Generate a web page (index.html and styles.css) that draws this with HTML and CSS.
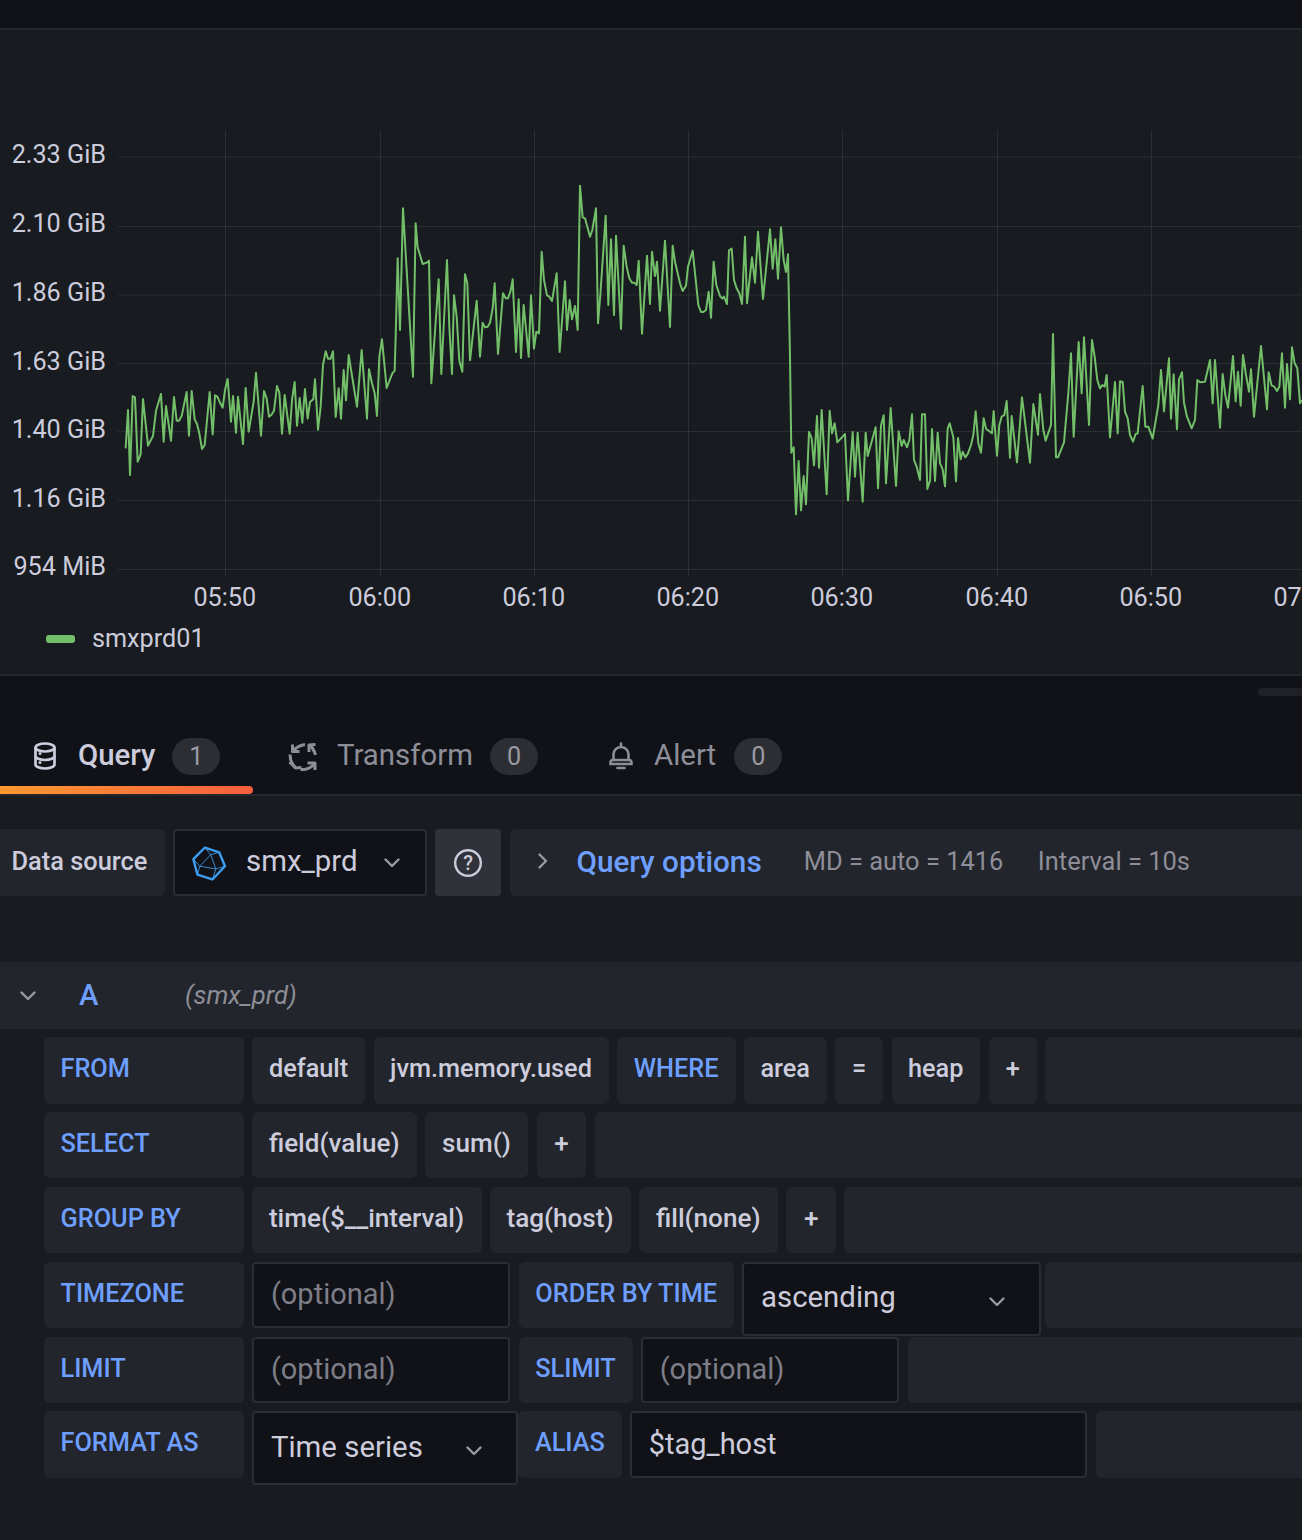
FILE: index.html
```html
<!DOCTYPE html>
<html lang="en">
<head>
<meta charset="utf-8">
<title>Query editor</title>
<link rel="stylesheet" href="styles.css">
</head>
<body>
<div class="topbar"></div>
<section class="panel">
  <svg class="chart" viewBox="0 30 1302 585" width="1302" height="585">
    <g class="grid">
      <path d="M118 157H1302M118 226.500H1302M118 295H1302M118 363.500H1302M118 431.500H1302M118 500.500H1302M118 569.500H1302"/>
      <path d="M225.500 130V577M380.500 130V577M534.500 130V577M688.500 130V577M842.500 130V577M997.500 130V577M1151.500 130V577"/>
    </g>
    <g class="ylabels">
      <text x="106" y="162.800">2.33 GiB</text>
      <text x="106" y="231.800">2.10 GiB</text>
      <text x="106" y="300.800">1.86 GiB</text>
      <text x="106" y="369.800">1.63 GiB</text>
      <text x="106" y="437.800">1.40 GiB</text>
      <text x="106" y="506.800">1.16 GiB</text>
      <text x="106" y="574.800">954 MiB</text>
    </g>
    <g class="xlabels">
      <text x="224.800" y="605.800">05:50</text>
      <text x="379.800" y="605.800">06:00</text>
      <text x="533.800" y="605.800">06:10</text>
      <text x="687.800" y="605.800">06:20</text>
      <text x="841.800" y="605.800">06:30</text>
      <text x="996.800" y="605.800">06:40</text>
      <text x="1150.800" y="605.800">06:50</text>
      <text x="1304.800" y="605.800">07:00</text>
    </g>
    <g class="series">
      <polyline transform="translate(120 170) scale(.33333)" points="17,835 24,720 30,915 38,678 45,682 53,875 62,853 69,687 84,827 99,798 108,722 123,672 131,815 138,708 153,812 162,681 170,752 177,752 185,738 200,666 207,797 215,663 224,748 231,762 238,790 246,837 254,825 269,666 278,793 285,676 292,680 301,700 308,713 315,660 323,627 333,755 339,678 348,788 354,680 369,822 377,654 386,785 401,695 408,608 423,797 432,663 440,685 447,740 454,735 462,722 471,648 478,668 486,791 494,675 509,791 516,690 524,636 531,767 539,684 547,758 555,657 563,746 570,696 580,688 585,628 594,779 602,710 609,585 617,544 624,566 632,566 639,544 647,741 656,655 663,746 671,600 678,691 686,555 711,710 725,540 741,746 747,598 756,640 764,670 771,738 778,560 786,508 800,654 817,610 824,602 827,500 833,265 840,480 849,115 879,620 887,160 893,232 908,282 920,278 927,272 934,640 956,328 964,612 981,270 988,470 996,612 1002,376 1010,440 1018,572 1027,605 1035,313 1042,340 1050,572"/>
      <polyline transform="translate(470 170) scale(.33333)" points="0,572 20,392 30,560 38,458 45,472 53,470 60,458 68,415 74,340 84,552 99,370 107,385 114,385 122,362 128,328 138,546 146,388 153,564 161,405 176,560 183,376 192,536 199,485 207,490 215,245 222,330 231,376 238,380 246,393 260,310 269,546 285,334 291,480 299,390 306,448 315,408 323,480 330,47 338,142 345,145 360,200 367,180 378,115 384,460 391,375 407,137 415,405 423,208 432,435 438,197 453,477 461,227 470,290 478,325 486,338 493,338 500,345 506,272 516,491 531,257 540,402 546,245 555,318 561,275 570,422 585,212 600,471 608,227 615,275 630,340 638,363 648,347 654,290 668,242 685,405 693,426 700,426 708,420 716,365 723,443 731,275 739,345 750,378 757,386 762,380 771,402 777,241 785,236 792,330 800,355 808,370 816,402 825,200 831,400 846,262 855,338 864,185 879,387 900,178 908,296 916,208 924,326 933,172 941,270 948,306 954,253 960,560 964,848 971,832 978,1033 986,873 993,1021 1001,918 1008,1003 1017,786 1025,805 1032,886 1041,738 1047,895"/>
      <polyline transform="translate(820 320) scale(.33333)" points="-3,445 5,270 20,523 29,272 36,340 44,310 52,367 75,342 84,541 98,336 105,470 113,338 128,545 137,338 143,408 167,322 174,505 183,317 191,286 198,490 212,264 228,498 236,334 245,378 251,360 261,382 268,360 276,283 282,420 290,440 300,480 306,283 315,283 322,507 330,482 336,327 345,483 353,338 360,430 368,448 375,499 383,325 389,310 400,352 408,484 414,354 422,418 428,395 436,412 444,400 453,375 460,345 467,274 475,370 483,398 491,295 498,326 516,340 521,273 531,407 538,315 545,290 553,285 560,243 570,413 575,288 591,427 606,232 630,428 640,252 654,344 660,222 670,330 677,362 693,315 699,42 708,412 714,412 732,367 745,220 753,100 761,350 776,66 785,220 792,52 807,315 816,60 824,110 832,180 840,205 847,195 854,200 860,165 870,352 885,186 893,340 900,184 908,186 915,275 923,295 930,345 939,365 947,342 953,340 968,198 976,320 985,320 998,356 1015,255 1023,150 1032,274 1047,115 1053,296 1061,163 1071,328 1077,178 1086,157 1092,248 1101,290 1115,325 1125,300 1132,180 1140,187 1155,185 1170,120 1178,250 1185,120 1200,323 1208,162 1216,225 1224,263 1239,108 1247,244 1254,155 1262,257 1269,105 1278,165 1287,215 1293,148 1302,290 1323,78 1341,268 1346,157 1355,197 1363,200 1371,213 1378,200 1386,100 1395,263 1401,132 1410,238 1416,82 1424,130 1432,145 1440,250 1446,240"/>
    </g>
  </svg>
  <div class="legend"><span class="swatch"></span><span>smxprd01</span></div>
</section>

<div class="handle-row"><span class="handle"></span></div>

<nav class="tabs">
  <div class="tab active">
    <svg class="ico-db" viewBox="0 0 22 28" width="22" height="28"><g fill="none" stroke="currentColor" stroke-width="2.700"><ellipse cx="11" cy="5.500" rx="9.500" ry="4"/><path d="M1.500 5.500v17c0 2.200 4.300 4 9.500 4s9.500-1.800 9.500-4v-17"/><path d="M1.500 14c0 2.200 4.300 4 9.500 4s9.500-1.800 9.500-4"/></g><circle cx="6" cy="11.500" r="1.500" fill="currentColor"/><circle cx="6" cy="20.500" r="1.500" fill="currentColor"/></svg>
    <span class="tab-label">Query</span><span class="badge">1</span>
  </div>
  <div class="tab tab-transform">
    <svg class="ico-tr" viewBox="0 0 30 30" width="30" height="30"><g fill="none" stroke="currentColor" stroke-width="3" stroke-linejoin="round"><path d="M4.500 9.500C7.500 5.500 11.500 3.500 17 2.500"/><path d="M4.500 2.500v7h7"/><path d="M21.500 3c3 2.500 5 6 6 10"/><path d="M21 10V3l6.500-.5"/><path d="M2 12.500c0 5 1.800 9.500 5.500 13"/><path d="M1.500 20 7.500 26l6-.5"/><path d="M12.500 27.500c5 .5 10.500-1.500 14.500-6"/><path d="M19.500 21H27v7"/></g></svg>
    <span class="tab-label">Transform</span><span class="badge">0</span>
  </div>
  <div class="tab tab-alert">
    <svg class="ico-bell" viewBox="0 0 26 28" width="26" height="28"><g fill="none" stroke="currentColor" stroke-width="2.600" stroke-linecap="round"><path d="M13 1.500v3"/><path d="M5.500 18v-5.500a7.500 7.500 0 0 1 15 0V18"/><path d="M2.500 22v-1.500c0-1.500 1.200-2.500 2.500-2.500h16c1.300 0 2.500 1 2.500 2.500V22z"/><path d="M9.500 26h7"/></g></svg>
    <span class="tab-label">Alert</span><span class="badge">0</span>
  </div>
</nav>

<main class="editor">
  <div class="ds-row">
    <div class="box ds-label">Data source</div>
    <div class="field ds-select">
      <svg class="ico-ds" viewBox="95 60 100 105" width="34" height="36"><path class="ds-outer" d="M133 67 175 81 192 122 155 161 111 147 99 101z"/><path class="ds-inner" d="M118 122 150 88 165 130zM150 88 133 67M150 88 175 81M118 122 99 101M118 122 111 147M165 130 155 161M165 130 192 122"/></svg>
      <span class="ds-value">smx_prd</span>
      <svg class="chev" viewBox="0 0 16 10" width="16" height="10"><path d="M1.500 1.500 8 8l6.500-6.500"/></svg>
    </div>
    <div class="help"><svg viewBox="0 0 30 30" width="30" height="30"><circle cx="15" cy="15" r="12.800"/></svg><span class="help-mark">?</span></div>
    <div class="box options">
      <svg class="chev-right" viewBox="0 0 10 16" width="10" height="16"><path d="M1.500 1.500 8 8l-6.500 6.500"/></svg>
      <span class="options-title">Query options</span>
      <span class="options-info">MD = auto = 1416</span>
      <span class="options-info second">Interval = 10s</span>
    </div>
  </div>

  <div class="query-head">
    <svg class="chev" viewBox="0 0 16 10" width="16" height="10"><path d="M1.500 1.500 8 8l6.500-6.500"/></svg>
    <span class="ref">A</span>
    <span class="ds-name">(smx_prd)</span>
  </div>

  <div class="rows">
    <div class="row row-a">
      <div class="box key lead">FROM</div>
      <div class="box">default</div>
      <div class="box">jvm.memory.used</div>
      <div class="box key">WHERE</div>
      <div class="box">area</div>
      <div class="box">=</div>
      <div class="box">heap</div>
      <div class="box plus">+</div>
      <div class="box fill"></div>
    </div>
    <div class="row">
      <div class="box key lead">SELECT</div>
      <div class="box">field(value)</div>
      <div class="box">sum()</div>
      <div class="box plus">+</div>
      <div class="box fill"></div>
    </div>
    <div class="row">
      <div class="box key lead">GROUP BY</div>
      <div class="box">time($__interval)</div>
      <div class="box">tag(host)</div>
      <div class="box">fill(none)</div>
      <div class="box plus">+</div>
      <div class="box fill"></div>
    </div>
    <div class="row">
      <div class="box key lead">TIMEZONE</div>
      <div class="field input ph">(optional)</div>
      <div class="box key">ORDER BY TIME</div>
      <div class="field select w-order"><span>ascending</span><svg class="chev" viewBox="0 0 16 10" width="16" height="10"><path d="M1.500 1.500 8 8l6.500-6.500"/></svg></div>
      <div class="box fill tight"></div>
    </div>
    <div class="row">
      <div class="box key lead">LIMIT</div>
      <div class="field input ph">(optional)</div>
      <div class="box key">SLIMIT</div>
      <div class="field input ph">(optional)</div>
      <div class="box fill"></div>
    </div>
    <div class="row">
      <div class="box key lead">FORMAT AS</div>
      <div class="field select w-format"><span>Time series</span><svg class="chev" viewBox="0 0 16 10" width="16" height="10"><path d="M1.500 1.500 8 8l6.500-6.500"/></svg></div>
      <div class="box key flush">ALIAS</div>
      <div class="field input w-alias">$tag_host</div>
      <div class="box fill"></div>
    </div>
  </div>
</main>
</body>
</html>
```

FILE: styles.css
```css
* { box-sizing: border-box; }
html, body { margin: 0; padding: 0; }
body {
  width: 1302px;
  height: 1540px;
  overflow: hidden;
  background: #181b1f;
  color: #ccccdc;
  font-family: Roboto, "Liberation Sans", sans-serif;
}
.topbar { height: 30px; background: #111217; border-bottom: 2px solid #25272d; }

.panel { height: 646px; background: #181b1f; border-bottom: 2px solid #25272d; overflow: hidden; }
.chart { display: block; }
.grid path { fill: none; stroke: #ccccdc; stroke-opacity: .1; stroke-width: 1; }
.ylabels text, .xlabels text { fill: #ccccdc; font-size: 25.200px; }
.ylabels text { text-anchor: end; }
.xlabels text { text-anchor: middle; }
.series polyline { fill: none; stroke: #73bf69; stroke-width: 2; stroke-linejoin: round; vector-effect: non-scaling-stroke; }
.legend { display: flex; align-items: center; height: 44px; padding-left: 46px; margin-top: 1px; font-size: 25.200px; }
.swatch { width: 29px; height: 8px; border-radius: 3px; background: #73bf69; margin: 2px 17px 0 0; }

.handle-row { height: 40px; background: #111217; display: flex; justify-content: flex-end; padding-top: 12px; }
.handle { width: 44px; height: 8px; background: #1f2126; border-radius: 4px 0 0 4px; }

.tabs { display: flex; height: 80px; background: #111217; border-bottom: 2px solid #25272d; }
.tab { position: relative; display: flex; align-items: flex-start; height: 78px; padding-top: 24px; color: #8e8e99; font-size: 29.400px; width: 254px; }
.tab svg { flex: none; margin-top: 2px; }
.tab.active { color: #ccccdc; padding-left: 34px; width: 253px; }
.tab.active .tab-label { font-weight: 500; margin-left: 22px; }
.tab.active::after {
  content: "";
  position: absolute;
  left: 0;
  right: 0;
  bottom: 0;
  height: 8px;
  border-radius: 0 4px 4px 0;
  background: linear-gradient(90deg, #ff9830, #f55f3e);
}
.tab-transform { padding-left: 35px; width: 320px; }
.tab-alert { padding-left: 35px; }
.tab-label { margin: -2px 0 0 19px; line-height: 34px; }
.tab-alert .tab-label { margin-left: 20px; }
.badge {
  display: flex;
  align-items: center;
  justify-content: center;
  width: 48px;
  height: 37px;
  margin: -2px 0 0 17px;
  border-radius: 19px;
  background: #2c2e33;
  color: #9a9aa5;
  font-size: 25.200px;
}
.tab-alert .badge { margin-left: 18px; }

.editor { padding-top: 33px; }
.box {
  display: flex;
  align-items: center;
  flex: none;
  padding: 0 17.500px 3.500px 16.500px;
  background: #22252b;
  border-radius: 6px;
  font-size: 26.100px;
  font-weight: 500;
  white-space: nowrap;
}
.field {
  display: flex;
  align-items: center;
  flex: none;
  background: #111217;
  border: 2px solid #2b2d33;
  border-radius: 4px;
  font-size: 29px;
  white-space: nowrap;
}
.ds-row { display: flex; gap: 8px; height: 67px; }
.ds-label { width: 165px; padding: 0 0 3px 11.500px; border-radius: 0 6px 6px 0; font-size: 25.400px; }
.ds-select { width: 254px; padding-left: 17px; font-size: 29.400px; }
.ds-value { margin-bottom: 4px; }
.ico-ds { margin-right: 20px; flex: none; }
.ds-outer { fill: none; stroke: #3d9df0; stroke-width: 7; stroke-linejoin: round; }
.ds-inner { fill: none; stroke: #3d9df0; stroke-width: 2.500; }
.ds-select .chev { margin-left: 26px; }
.chev, .chev-right { flex: none; }
.chev path, .chev-right path { fill: none; stroke: #9a9aa5; stroke-width: 2.400; stroke-linecap: round; stroke-linejoin: round; }
.help { position: relative; flex: none; width: 66px; display: flex; align-items: center; justify-content: center; background: #2f3238; border-radius: 4px; margin-right: 1px; }
.help circle { fill: none; stroke: #ccccdc; stroke-width: 2.400; }
.help svg { display: block; }
.help-mark { position: absolute; left: 0; right: 0; top: 0; bottom: 0; display: flex; align-items: center; justify-content: center; font-size: 20px; font-weight: 500; }
.options { flex: 1; padding: 0 0 3px 28px; border-radius: 6px 0 0 6px; font-weight: 400; }
.options-title { margin-left: 28.500px; color: #6e9fff; font-size: 29.700px; font-weight: 500; }
.options-info { margin-left: 42px; color: #8e8e99; font-size: 25.450px; }
.options-info.second { margin-left: 34.500px; }

.query-head { display: flex; align-items: center; height: 67px; margin-top: 66px; padding-left: 20px; background: #22252b; }
.ref { margin: 0 0 2px 43px; width: 106px; color: #6e9fff; font-size: 29.400px; font-weight: 500; }
.ds-name { margin-bottom: 2px; color: #8e8e99; font-size: 25.700px; font-style: italic; }

.rows { display: flex; flex-direction: column; gap: 8.400px; padding: 8px 0 0 44px; }
.row { display: flex; align-items: flex-start; gap: 8.400px; height: 66.500px; }
.row > .box, .row > .input { height: 66.500px; }
.row-a .box, .box.key { font-size: 25.300px; padding-right: 17px; }
.key { color: #6e9fff; }
.lead { width: 200px; }
.plus { padding: 0 17.500px 3.500px; }
.row-a .plus { padding-left: 17px; }
.fill { flex: 1; padding: 0; border-radius: 6px 0 0 6px; }
.tight { margin-left: -5px; }
.flush { margin-left: -8.400px; }
.input { width: 258px; padding: 0 0 2px 16.500px; }
.input.ph { color: #7e7e89; }
.select { height: 74px; padding: 0 0 3px 16.500px; justify-content: space-between; font-size: 29.400px; }
.select .chev { margin-right: 34px; margin-top: 9px; }
.w-order { width: 299px; }
.w-format { width: 266px; }
.w-alias { width: 457px; }
```
